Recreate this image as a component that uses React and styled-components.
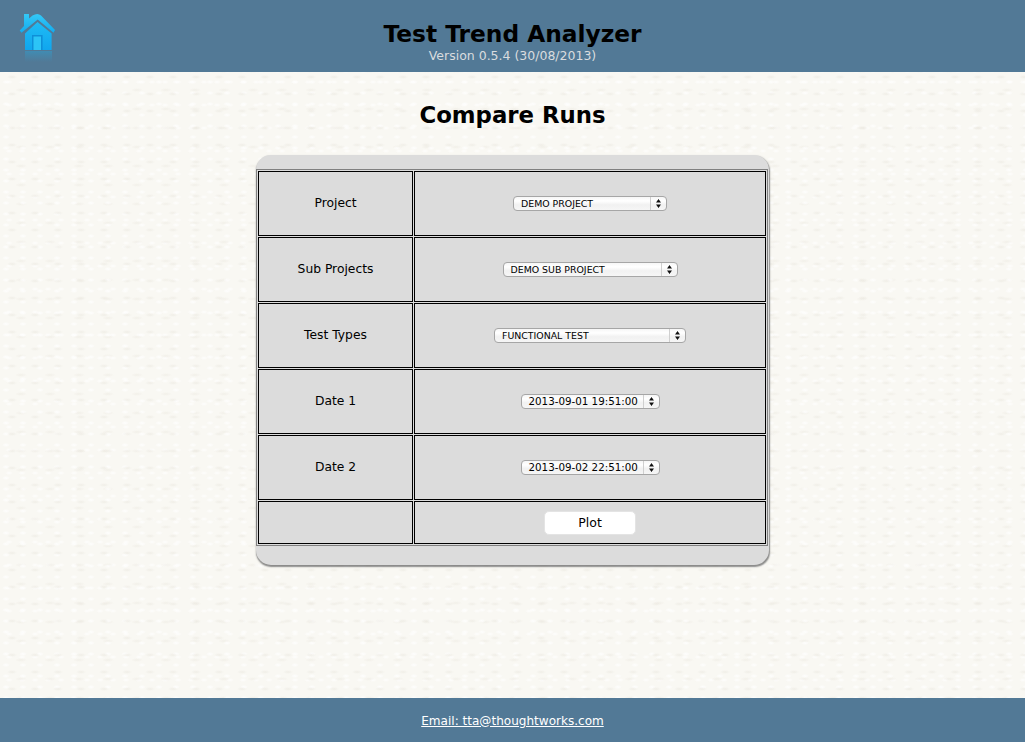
import React from "react";
import styled, { createGlobalStyle } from "styled-components";

const Global = createGlobalStyle`
  html, body { margin: 0; padding: 0; height: 100%; }
  #root { height: 100%; }
  body {
    font-family: "DejaVu Sans", Verdana, sans-serif;
    background-color: #f9f8f4;
  }
`;

const Page = styled.div`
  width: 1025px;
  height: 742px;
  display: flex;
  flex-direction: column;
  overflow: hidden;
  background-color: #f9f8f3;
  background-image:
    radial-gradient(ellipse 5px 2px at 12px 9px, rgba(232,229,220,.55), transparent),
    radial-gradient(ellipse 4px 2px at 6px 5px, rgba(255,255,255,.9), transparent),
    radial-gradient(ellipse 6px 2px at 21px 14px, rgba(234,231,223,.5), transparent),
    radial-gradient(ellipse 4px 2px at 9px 13px, rgba(255,255,255,.8), transparent);
  background-size: 23px 17px, 17px 11px, 29px 19px, 13px 23px;
`;

const Header = styled.header`
  position: relative;
  height: 72px;
  flex: none;
  background: #527996;
  text-align: center;
`;

const HomeLink = styled.a`
  position: absolute;
  left: 19px;
  top: 13px;
  width: 37px;
  height: 50px;
  display: block;
`;

const Title = styled.h1`
  margin: 0;
  padding-top: 20px;
  font-size: 23.3px;
  line-height: 28px;
  font-weight: 700;
  color: #000;
`;

const Version = styled.div`
  font-size: 12.5px;
  line-height: 15px;
  color: #d9dcdf;
`;

const Main = styled.main`
  flex: 1;
  display: flex;
  flex-direction: column;
  align-items: center;
`;

const Heading = styled.h2`
  margin: 28px 0 25px;
  font-size: 22.8px;
  line-height: 30px;
  font-weight: 700;
  color: #000;
`;

const Panel = styled.div`
  box-sizing: border-box;
  width: 513px;
  height: 410px;
  padding: 14px 0 0;
  background: #dcdcdc;
  border-radius: 15px;
  box-shadow: 0.5px 1.5px 1.5px rgba(110,110,110,.8);
`;

const Grid = styled.table`
  width: 512px;
  border-collapse: separate;
  border-spacing: 1px;
  border: 1px solid #808080;
  table-layout: fixed;
`;

const LabelCell = styled.td`
  width: 153px;
  height: ${p => (p.$short ? "41px" : "61px")};
  padding: 0 0 ${p => (p.$short ? "0" : "2px")};
  border: 1px solid #000;
  font-size: 12.3px;
  text-align: center;
  vertical-align: middle;
  color: #000;
`;

const FieldCell = styled.td`
  padding: 0;
  border: 1px solid #000;
  text-align: center;
  vertical-align: middle;
`;

const SelectBox = styled.div`
  display: inline-flex;
  box-sizing: border-box;
  width: ${p => p.$w}px;
  height: 15px;
  margin-bottom: 2px;
  vertical-align: middle;
  border: 1px solid #a6a6a6;
  border-radius: 4px;
  background: linear-gradient(#f6f6f6 0%, #ffffff 30%, #f1f1f1 60%, #f6f6f6 100%);
  overflow: hidden;
`;

const SelectText = styled.span`
  flex: 1;
  padding-left: 7px;
  text-align: left;
  font-family: "DejaVu Sans", sans-serif;
  font-size: ${p => (p.$date ? "10.3px" : "9.4px")};
  line-height: 13px;
  white-space: nowrap;
  color: #000;
`;

const SelectArrows = styled.span`
  flex: none;
  width: 15px;
  display: flex;
  align-items: center;
  justify-content: center;
  border-left: 1px solid #cfcfcf;
`;

const PlotButton = styled.button`
  box-sizing: border-box;
  display: block;
  width: 92px;
  height: 24px;
  margin: 0 auto;
  padding: 0;
  border: 1px solid #e4e4e4;
  border-radius: 5px;
  background: #fff;
  font-family: "DejaVu Sans", Verdana, sans-serif;
  font-size: 12.5px;
  color: #000;
`;

const Footer = styled.footer`
  box-sizing: border-box;
  height: 44px;
  flex: none;
  padding-top: 1px;
  background: #527996;
  display: flex;
  align-items: center;
  justify-content: center;
`;

const Mail = styled.a`
  font-size: 12.05px;
  color: #fff;
  text-decoration: underline;
`;

const Arrows = () => (
  <svg width="5" height="9" viewBox="0 0 5 9">
    <path d="M2.5 0 L5 3.4 H0 Z M2.5 9 L0 5.6 H5 Z" fill="#111" />
  </svg>
);

const HomeIcon = () => (
  <svg width="37" height="50" viewBox="0 0 37 50">
    <defs>
      <linearGradient id="roof" x1="0" y1="0" x2="0" y2="1">
        <stop offset="0" stopColor="#34c8f7" />
        <stop offset="1" stopColor="#12acef" />
      </linearGradient>
      <linearGradient id="body" x1="0" y1="0" x2="0" y2="1">
        <stop offset="0" stopColor="#1fbcf5" />
        <stop offset="1" stopColor="#10a6ee" />
      </linearGradient>
      <linearGradient id="refl" x1="0" y1="0" x2="0" y2="1">
        <stop offset="0" stopColor="#2f9fd0" stopOpacity=".5" />
        <stop offset="1" stopColor="#2f9fd0" stopOpacity="0" />
      </linearGradient>
    </defs>
    <path d="M6 38 H33 V49 H6 Z" fill="url(#refl)" />
    <path d="M18.5 9 L32.6 20.5 V37 H6 V20.5 Z" fill="url(#body)" />
    <path d="M13 22 H23.6 V37 H13 Z" fill="#0e8fd8" />
    <path d="M14.5 23.5 H22 V37 H14.5 Z" fill="#2cc4f6" />
    <path d="M5 1 H10 V5.5 L13.5 2.5 Q18.7 -0.5 22 2.5 L36 17 L34.5 19.7 L18.7 6.5 L2.5 19.7 L0.7 17.5 L5 13 Z" fill="url(#roof)" />
  </svg>
);

const rows = [
  { label: "Project", value: "DEMO PROJECT", w: 154 },
  { label: "Sub Projects", value: "DEMO SUB PROJECT", w: 175 },
  { label: "Test Types", value: "FUNCTIONAL TEST", w: 192 },
  { label: "Date 1", value: "2013-09-01 19:51:00", w: 139, date: true },
  { label: "Date 2", value: "2013-09-02 22:51:00", w: 139, date: true },
];

export default function App() {
  return (
    <Page>
      <Global />
      <Header>
        <HomeLink href="#"><HomeIcon /></HomeLink>
        <Title>Test Trend Analyzer</Title>
        <Version>Version 0.5.4 (30/08/2013)</Version>
      </Header>
      <Main>
        <Heading>Compare Runs</Heading>
        <Panel>
          <Grid>
            <tbody>
              {rows.map(r => (
                <tr key={r.label}>
                  <LabelCell>{r.label}</LabelCell>
                  <FieldCell>
                    <SelectBox $w={r.w}>
                      <SelectText $date={r.date}>{r.value}</SelectText>
                      <SelectArrows><Arrows /></SelectArrows>
                    </SelectBox>
                  </FieldCell>
                </tr>
              ))}
              <tr>
                <LabelCell $short />
                <FieldCell><PlotButton>Plot</PlotButton></FieldCell>
              </tr>
            </tbody>
          </Grid>
        </Panel>
      </Main>
      <Footer><Mail href="#">Email: tta@thoughtworks.com</Mail></Footer>
    </Page>
  );
}
